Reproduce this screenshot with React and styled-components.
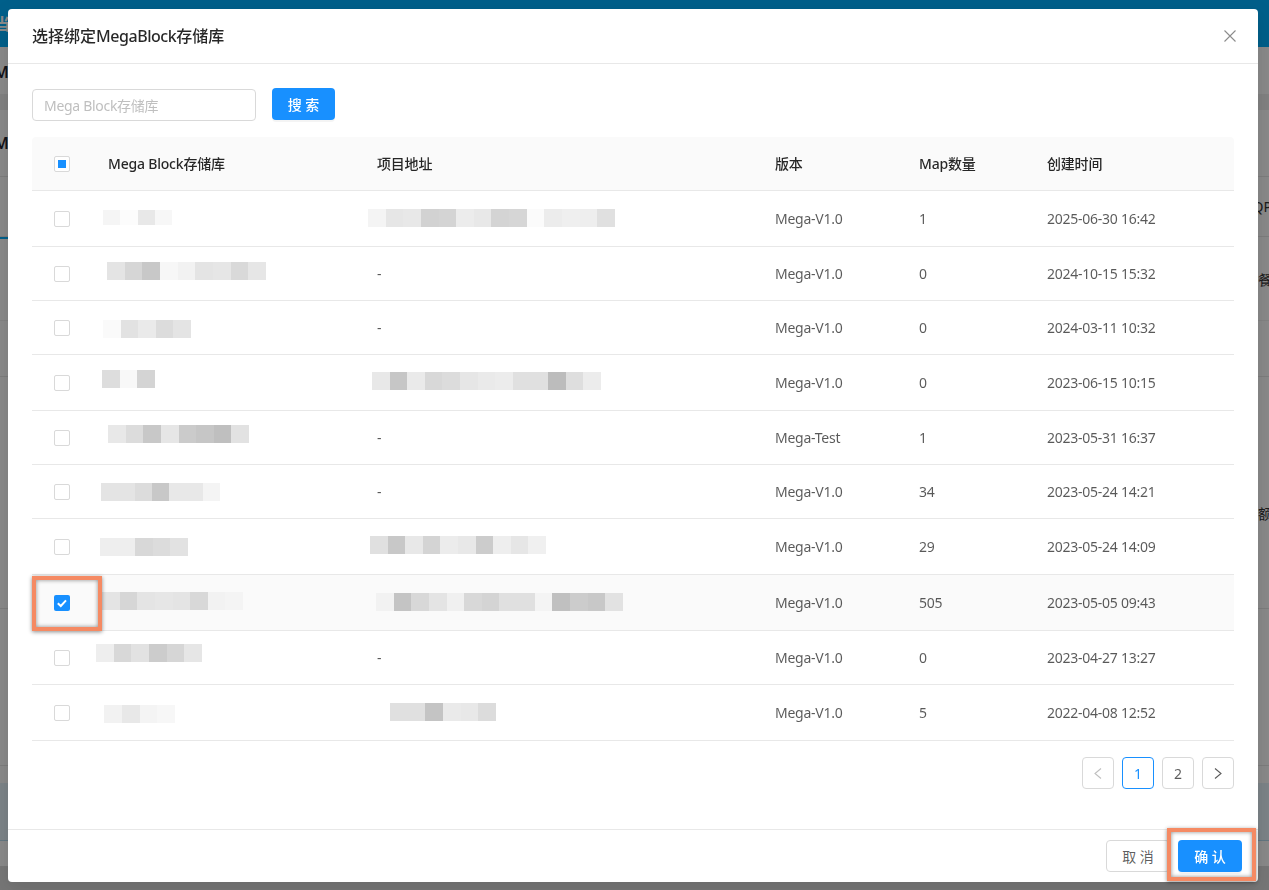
import React from 'react';
import styled, { createGlobalStyle } from 'styled-components';

const fontStack = '"Noto Sans", "Noto Sans CJK SC", sans-serif';

// pixelated (redacted) blocks, shades are hex greys
const rows = [
  { name: { x: 11, y: 19, w: 69, h: 15, cells: ['f5', 'fc', 'e8', 'f7'] }, addr: { x: 7, y: 18, w: 247, cells: ['f4', 'e6', 'e8', 'd2', 'd4', 'ec', 'e8', 'd4', 'd6', 'fb', 'ec', 'ef', 'ee', 'e0'] }, version: 'Mega-V1.0', maps: '1', time: '2025-06-30 16:42', h: 56 },
  { name: { x: 15, y: 15, w: 159, cells: ['e4', 'd6', 'c8', 'f7', 'f2', 'e4', 'e6', 'd9', 'e6'] }, version: 'Mega-V1.0', maps: '0', time: '2024-10-15 15:32', h: 54 },
  { name: { x: 11, y: 19, w: 88, cells: ['fa', 'e2', 'ea', 'dc', 'e4'] }, version: 'Mega-V1.0', maps: '0', time: '2024-03-11 10:32', h: 54 },
  { name: { x: 10, y: 15, w: 53, cells: ['dd', 'f8', 'd4'] }, addr: { x: 11, y: 17, w: 229, cells: ['e8', 'c6', 'ea', 'd8', 'dc', 'e6', 'ea', 'ec', 'e0', 'e0', 'bc', 'de', 'ec'] }, version: 'Mega-V1.0', maps: '0', time: '2023-06-15 10:15', h: 56 },
  { name: { x: 16, y: 14, w: 141, cells: ['e8', 'dc', 'c8', 'e6', 'cb', 'c6', 'bf', 'e2'] }, version: 'Mega-Test', maps: '1', time: '2023-05-31 16:37', h: 54 },
  { name: { x: 9, y: 18, w: 119, cells: ['e4', 'e4', 'dc', 'c8', 'e8', 'e8', 'f4'] }, version: 'Mega-V1.0', maps: '34', time: '2023-05-24 14:21', h: 54 },
  { name: { x: 8, y: 19, w: 88, cells: ['ee', 'ee', 'd8', 'dc', 'e2'] }, addr: { x: 9, y: 17, w: 176, cells: ['e0', 'c8', 'e8', 'd4', 'ec', 'e8', 'cc', 'ee', 'e6', 'f0'] }, version: 'Mega-V1.0', maps: '29', time: '2023-05-24 14:09', h: 56 },
  { name: { x: 10, y: 17, w: 141, cells: ['e4', 'd6', 'e4', 'e6', 'e4', 'd8', 'f2', 'f4'] }, addr: { x: 15, y: 18, w: 247, cells: ['f2', 'c4', 'd8', 'e4', 'f0', 'd8', 'd4', 'e0', 'e0', 'f4', 'c0', 'cc', 'c8', 'e2'] }, version: 'Mega-V1.0', maps: '505', time: '2023-05-05 09:43', h: 56, selected: true },
  { name: { x: 4, y: 13, w: 106, cells: ['ee', 'd8', 'e2', 'cc', 'd6', 'e6'] }, version: 'Mega-V1.0', maps: '0', time: '2023-04-27 13:27', h: 54 },
  { name: { x: 12, y: 20, w: 71, cells: ['f2', 'e8', 'f4', 'f7'] }, addr: { x: 29, y: 18, w: 106, cells: ['e0', 'e0', 'c4', 'ea', 'e8', 'dc'] }, version: 'Mega-V1.0', maps: '5', time: '2022-04-08 12:52', h: 56 },
];

// strips of the page that is dimmed behind the dialog
const backRows = [
  { h: 47, bg: '#00b0ff', left: '当', leftColor: '#fff' },
  { h: 47, left: 'M', pad: 3 },
  { h: 16, bg: '#f0f0f0' },
  { h: 67, left: 'M', line: '#e8e8e8' },
  { h: 60, right: 'QP', line: '#e8e8e8', tab: true },
  { h: 84, right: '餐', line: '#f2f2f2' },
  { h: 56, line: '#e8e8e8' },
  { h: 232, right: '额', line: '#e8e8e8', pad: 40 },
  { h: 157, line: '#e8e8e8' },
  { h: 17 },
  { h: 58, bg: '#e6f4fb', line: '#b8dcf0' },
  { h: 25 },
  { h: 25, bg: '#dcdcdc' },
];

const App = () => (
  <>
    <GlobalStyle />
    <BackPage>
      {backRows.map((row, i) => (
        <BackRow key={i} $h={row.h} $bg={row.bg} $line={row.line} $pad={row.pad}>
          <BackLeft $color={row.leftColor}>{row.left}</BackLeft>
          <BackRight>{row.right}</BackRight>
          {row.tab && <BackTab />}
        </BackRow>
      ))}
    </BackPage>
    <Mask />
    <Dialog>
      <DialogHeader>
        <DialogTitle>选择绑定<TitleLatin>MegaBlock</TitleLatin>存储库</DialogTitle>
        <CloseButton>
          <svg width="12" height="12" viewBox="0 0 12 12" fill="none" stroke="#8c8c8c" strokeWidth="1.1">
            <path d="M0.5 0.5 L11.5 11.5 M11.5 0.5 L0.5 11.5" />
          </svg>
        </CloseButton>
      </DialogHeader>
      <DialogBody>
        <SearchBar>
          <SearchInput placeholder="Mega Block存储库" />
          <PrimaryButton>搜 索</PrimaryButton>
        </SearchBar>
        <HeadRow>
          <CheckCell>
            <CheckBox><HalfMark /></CheckBox>
          </CheckCell>
          <HeadCell>Mega Block存储库</HeadCell>
          <HeadCell>项目地址</HeadCell>
          <HeadCell>版本</HeadCell>
          <HeadCell>Map数量</HeadCell>
          <HeadCell>创建时间</HeadCell>
        </HeadRow>
        {rows.map((row) => (
          <BodyRow key={row.time} $h={row.h} $selected={row.selected}>
            <CheckCell>
              <CheckBox $checked={row.selected}>
                {row.selected && (
                  <svg width="16" height="16" viewBox="0 0 16 16" fill="none" stroke="#fff" strokeWidth="2">
                    <path d="M3.8 8.2 L6.8 11 L12 5.4" />
                  </svg>
                )}
              </CheckBox>
              {row.selected && <CalloutFrame $w={70} $h={55} $left={0} $top={1} />}
            </CheckCell>
            <BodyCell>
              <Mosaic block={row.name} />
            </BodyCell>
            <BodyCell>
              {row.addr ? <Mosaic block={row.addr} /> : '-'}
            </BodyCell>
            <BodyCell>{row.version}</BodyCell>
            <BodyCell>{row.maps}</BodyCell>
            <BodyCell>{row.time}</BodyCell>
          </BodyRow>
        ))}
        <Pager>
          <PageButton $muted>
            <svg width="8" height="11" viewBox="0 0 8 11" fill="none" stroke="currentColor" strokeWidth="1.1">
              <path d="M7 0.5 L1 5.5 L7 10.5" />
            </svg>
          </PageButton>
          <PageButton $active>1</PageButton>
          <PageButton>2</PageButton>
          <PageButton>
            <svg width="8" height="11" viewBox="0 0 8 11" fill="none" stroke="currentColor" strokeWidth="1.1">
              <path d="M1 0.5 L7 5.5 L1 10.5" />
            </svg>
          </PageButton>
        </Pager>
      </DialogBody>
      <DialogFooter>
        <GhostButton>取 消</GhostButton>
        <ConfirmWrap>
          <PrimaryButton>确 认</PrimaryButton>
          <CalloutFrame $w={89} $h={53} $left={-11} $top={-12} />
        </ConfirmWrap>
      </DialogFooter>
    </Dialog>
  </>
);

const Mosaic = ({ block }) => (
  <MosaicStrip $x={block.x} $y={block.y} $w={block.w} $h={block.h || 18}>
    {block.cells.map((shade, i) => (
      <MosaicCell key={i} $shade={shade} />
    ))}
  </MosaicStrip>
);

export default App;

const GlobalStyle = createGlobalStyle`
  * {
    box-sizing: border-box;
  }

  body {
    margin: 0;
    font-family: ${fontStack};
    background: #fff;
    overflow: hidden;
  }
`;

const BackPage = styled.div`
  height: 890px;
  overflow: hidden;
  background: #fff;
`;

const BackRow = styled.div`
  position: relative;
  height: ${({ $h }) => $h}px;
  padding-top: ${({ $pad }) => $pad || 0}px;
  display: flex;
  justify-content: space-between;
  align-items: center;
  background: ${({ $bg }) => $bg || 'transparent'};
  border-bottom: 1px solid ${({ $line }) => $line || 'transparent'};
`;

const BackLeft = styled.span`
  margin-left: -6px;
  font-size: 16px;
  font-weight: 600;
  color: ${({ $color }) => $color || '#1f2330'};
`;

const BackRight = styled.span`
  margin-right: -3px;
  font-size: 14px;
  color: #333;
`;

const BackTab = styled.div`
  position: absolute;
  left: 0;
  bottom: -3px;
  width: 8px;
  height: 2px;
  background: #00b0ff;
`;

const Mask = styled.div`
  position: fixed;
  inset: 0;
  background: rgba(0, 0, 0, 0.46);
`;

const Dialog = styled.div`
  position: fixed;
  left: 8px;
  top: 9px;
  width: 1250px;
  height: 873px;
  display: flex;
  flex-direction: column;
  background: #fff;
  border-radius: 4px;
  box-shadow: 0 6px 16px rgba(0, 0, 0, 0.08), 0 9px 28px 8px rgba(0, 0, 0, 0.05);
`;

const DialogHeader = styled.div`
  height: 55px;
  flex: none;
  display: flex;
  align-items: center;
  justify-content: space-between;
  padding: 0 22px 1px 24px;
  border-bottom: 1px solid #e8e8e8;
`;

const DialogTitle = styled.div`
  margin-top: -1px;
  font-size: 16px;
  font-weight: 500;
  color: rgba(0, 0, 0, 0.85);
`;

const TitleLatin = styled.span`
  letter-spacing: -0.45px;
`;

const CloseButton = styled.div`
  display: flex;
`;

const DialogBody = styled.div`
  flex: 1;
  padding: 24px 24px 0;
`;

const SearchBar = styled.div`
  display: flex;
  align-items: flex-start;
  gap: 16px;
  margin-bottom: 17px;
`;

const SearchInput = styled.input`
  width: 224px;
  height: 32px;
  margin-top: 1px;
  padding: 0 11px;
  border: 1px solid #d9d9d9;
  border-radius: 4px;
  font-family: inherit;
  font-size: 14px;
  letter-spacing: -0.3px;
  outline: none;

  &::placeholder {
    color: #bfbfbf;
  }
`;

const PrimaryButton = styled.button`
  height: 32px;
  width: 63px;
  padding: 0;
  border: none;
  border-radius: 4px;
  background: #1890ff;
  color: #fff;
  font-family: inherit;
  font-size: 14px;
  font-weight: 500;
  box-shadow: 0 2px 0 rgba(0, 0, 0, 0.045);
`;

const GhostButton = styled.button`
  height: 32px;
  width: 64px;
  padding: 0;
  border: 1px solid #d9d9d9;
  border-radius: 4px;
  background: #fff;
  color: rgba(0, 0, 0, 0.65);
  font-family: inherit;
  font-size: 14px;
`;

const tableColumns = '60px 269px 398px 144px 128px 203px';

const HeadRow = styled.div`
  height: 54px;
  margin-top: -1px;
  display: grid;
  grid-template-columns: ${tableColumns};
  background: #fafafa;
  border-bottom: 1px solid #e8e8e8;
  border-radius: 4px 4px 0 0;
`;

const HeadCell = styled.div`
  display: flex;
  align-items: center;
  padding: 0 0 2px 16px;
  font-size: 14px;
  font-weight: 500;
  letter-spacing: -0.2px;
  color: rgba(0, 0, 0, 0.85);
`;

const BodyRow = styled.div`
  height: ${({ $h }) => $h}px;
  display: grid;
  grid-template-columns: ${tableColumns};
  background: ${({ $selected }) => ($selected ? '#fafafa' : '#fff')};
  border-bottom: 1px solid #e8e8e8;
`;

const BodyCell = styled.div`
  display: flex;
  align-items: center;
  padding-left: 16px;
  font-size: 14px;
  letter-spacing: -0.25px;
  color: rgba(0, 0, 0, 0.65);
`;

const CheckCell = styled.div`
  position: relative;
  display: flex;
  align-items: center;
  justify-content: center;
`;

const CheckBox = styled.div`
  width: 16px;
  height: 16px;
  display: flex;
  align-items: center;
  justify-content: center;
  border-radius: 2px;
  border: ${({ $checked }) => ($checked ? 'none' : '1px solid #d9d9d9')};
  background: ${({ $checked }) => ($checked ? '#1890ff' : '#fff')};
`;

const HalfMark = styled.div`
  width: 8px;
  height: 8px;
  background: #1890ff;
`;

const MosaicStrip = styled.div`
  align-self: flex-start;
  display: flex;
  width: ${({ $w }) => $w}px;
  height: ${({ $h }) => $h}px;
  margin: ${({ $y }) => $y}px 0 0 ${({ $x }) => $x - 16}px;
`;

const MosaicCell = styled.div`
  flex: 1;
  background: #${({ $shade }) => $shade.repeat(3)};
`;

const CalloutFrame = styled.div`
  position: absolute;
  left: ${({ $left }) => $left}px;
  top: ${({ $top }) => $top}px;
  width: ${({ $w }) => $w}px;
  height: ${({ $h }) => $h}px;
  border: 4px solid #f58a63;
  box-shadow: 0 1px 4px rgba(0, 0, 0, 0.45), inset 0 0 4px rgba(0, 0, 0, 0.45);
`;

const Pager = styled.div`
  display: flex;
  justify-content: flex-end;
  gap: 8px;
  margin-top: 16px;
`;

const PageButton = styled.div`
  width: 32px;
  height: 32px;
  display: flex;
  align-items: center;
  justify-content: center;
  border-radius: 4px;
  border: 1px solid ${({ $active }) => ($active ? '#1890ff' : '#d9d9d9')};
  font-size: 14px;
  color: ${({ $active, $muted }) => ($active ? '#1890ff' : $muted ? '#bfbfbf' : 'rgba(0, 0, 0, 0.65)')};
`;

const DialogFooter = styled.div`
  height: 53px;
  flex: none;
  display: flex;
  justify-content: flex-end;
  align-items: center;
  gap: 8px;
  padding: 0 16px;
  border-top: 1px solid #e8e8e8;
`;

const ConfirmWrap = styled.div`
  position: relative;
  display: flex;

  ${PrimaryButton} {
    width: 64px;
  }
`;
